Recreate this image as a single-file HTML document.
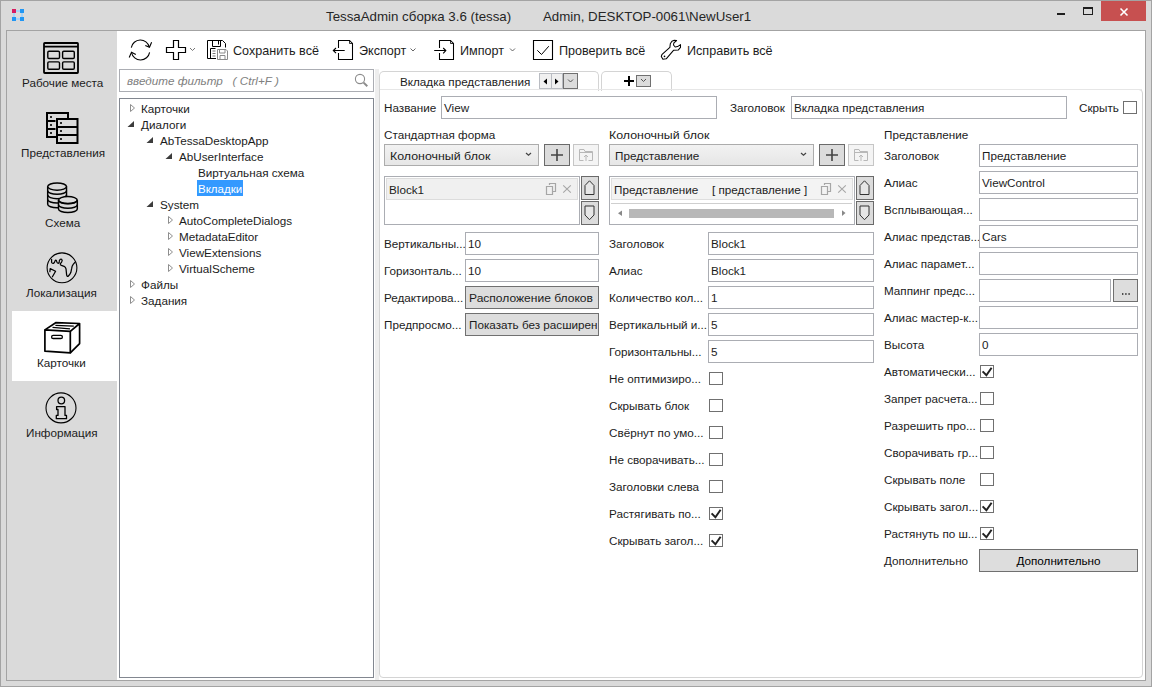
<!DOCTYPE html>
<html><head><meta charset="utf-8"><style>
html,body{margin:0;padding:0;width:1152px;height:687px;overflow:hidden;background:#dadada;}
.t{position:absolute;white-space:nowrap;line-height:20px;font-family:"Liberation Sans",sans-serif;}
.r{position:absolute;box-sizing:content-box;}
svg{position:absolute;left:0;top:0;}
</style></head><body>
<div class="r" style="left:0px;top:0px;width:1150px;height:685px;background:#dadada;border:1px solid #a3a3a3;"></div>
<div class="t " style="left:326px;top:7px;font-size:13.3px;color:#262626;">TessaAdmin сборка 3.6 (tessa)</div>
<div class="t " style="left:543px;top:7px;font-size:13.3px;color:#262626;">Admin, DESKTOP-0061\NewUser1</div>
<div class="r" style="left:1101px;top:1px;width:45px;height:20px;background:#c75050;"></div>
<div class="r" style="left:1083px;top:7px;width:8px;height:5px;border:1px solid #1e1e1e;border-top-width:2px;"></div>
<div class="r" style="left:1057px;top:13px;width:8px;height:2px;background:#1e1e1e;"></div>
<div class="r" style="left:6px;top:30px;width:1138px;height:649px;background:#fff;border:1px solid #a3a3a3;"></div>
<div class="r" style="left:7px;top:31px;width:110px;height:649px;background:#dadada;"></div>
<div class="r" style="left:12px;top:311px;width:105px;height:70px;background:#fff;"></div>
<div class="t " style="left:22px;top:73px;font-size:11.7px;color:#1c1c1c;">Рабочие места</div>
<div class="t " style="left:21px;top:143px;font-size:11.7px;color:#1c1c1c;">Представления</div>
<div class="t " style="left:45px;top:213px;font-size:11.7px;color:#1c1c1c;">Схема</div>
<div class="t " style="left:26px;top:283px;font-size:11.7px;color:#1c1c1c;">Локализация</div>
<div class="t " style="left:37px;top:353px;font-size:11.7px;color:#1c1c1c;">Карточки</div>
<div class="t " style="left:26px;top:423px;font-size:11.7px;color:#1c1c1c;">Информация</div>
<div class="t " style="left:233px;top:41px;font-size:12.6px;color:#1c1c1c;">Сохранить всё</div>
<div class="t " style="left:359px;top:41px;font-size:12.6px;color:#1c1c1c;">Экспорт</div>
<div class="t " style="left:460px;top:41px;font-size:12.6px;color:#1c1c1c;">Импорт</div>
<div class="t " style="left:559px;top:41px;font-size:12.6px;color:#1c1c1c;">Проверить всё</div>
<div class="t " style="left:687px;top:41px;font-size:12.6px;color:#1c1c1c;">Исправить всё</div>
<div class="r" style="left:119px;top:69px;width:253px;height:21px;background:#fff;border:1px solid #abadb3;"></div>
<div class="t " style="left:127px;top:71px;font-size:11.7px;color:#808080;font-style:italic;white-space:pre;">введите фильтр   ( Ctrl+F )</div>
<div class="r" style="left:119px;top:98px;width:253px;height:578px;background:#fff;border:1px solid #828790;"></div>
<div class="r" style="left:375px;top:69px;width:4px;height:611px;background:#eeeeee;"></div>
<div class="t " style="left:141px;top:99px;font-size:11.7px;color:#1c1c1c;">Карточки</div>
<div class="t " style="left:141px;top:115px;font-size:11.7px;color:#1c1c1c;">Диалоги</div>
<div class="t " style="left:160px;top:131px;font-size:11.7px;color:#1c1c1c;">AbTessaDesktopApp</div>
<div class="t " style="left:179px;top:147px;font-size:11.7px;color:#1c1c1c;">AbUserInterface</div>
<div class="t " style="left:198px;top:163px;font-size:11.7px;color:#1c1c1c;">Виртуальная схема</div>
<div class="r" style="left:197px;top:180px;width:46px;height:16px;background:#3399ff;"></div>
<div class="t " style="left:198px;top:179px;font-size:11.7px;color:#fff;transform:scaleX(0.985);transform-origin:0 0;">Вкладки</div>
<div class="t " style="left:160px;top:195px;font-size:11.7px;color:#1c1c1c;">System</div>
<div class="t " style="left:179px;top:211px;font-size:11.7px;color:#1c1c1c;">AutoCompleteDialogs</div>
<div class="t " style="left:179px;top:227px;font-size:11.7px;color:#1c1c1c;">MetadataEditor</div>
<div class="t " style="left:179px;top:243px;font-size:11.7px;color:#1c1c1c;">ViewExtensions</div>
<div class="t " style="left:179px;top:259px;font-size:11.7px;color:#1c1c1c;">VirtualScheme</div>
<div class="t " style="left:141px;top:275px;font-size:11.7px;color:#1c1c1c;">Файлы</div>
<div class="t " style="left:141px;top:291px;font-size:11.7px;color:#1c1c1c;">Задания</div>
<div class="r" style="left:379px;top:89px;width:762px;height:587px;background:#fff;border:1px solid #d4d4d4;border-radius:0 4px 4px 4px;"></div>
<div class="r" style="left:379px;top:71px;width:218px;height:19px;background:#fff;border:1px solid #d4d4d4;border-bottom:none;border-radius:5px 5px 0 0;"></div>
<div class="r" style="left:601px;top:71px;width:69px;height:19px;background:#fff;border:1px solid #d4d4d4;border-bottom:none;border-radius:5px 5px 0 0;"></div>
<div class="r" style="left:380px;top:89px;width:762px;height:1px;background:#e6e6e6;"></div>
<div class="t " style="left:400px;top:72px;font-size:11.7px;color:#1c1c1c;">Вкладка представления</div>
<div class="r" style="left:539px;top:73px;width:11px;height:14px;background:#f0f0f0;border:1px solid #b9bcc2;"></div>
<div class="r" style="left:551px;top:73px;width:10px;height:14px;background:#f0f0f0;border:1px solid #b9bcc2;"></div>
<div class="r" style="left:563px;top:73px;width:13px;height:14px;background:#dcdcdc;border:1px solid #707070;"></div>
<div class="r" style="left:636px;top:75px;width:13px;height:10px;background:#dcdcdc;border:1px solid #707070;"></div>
<div class="t " style="left:384px;top:98px;font-size:11.7px;color:#1c1c1c;">Название</div>
<div class="r" style="left:441px;top:96px;width:274px;height:21px;background:#fff;border:1px solid #abadb3;"></div>
<div class="t " style="left:444px;top:98px;font-size:11.7px;color:#1c1c1c;">View</div>
<div class="t " style="left:730px;top:98px;font-size:11.7px;color:#1c1c1c;">Заголовок</div>
<div class="r" style="left:791px;top:96px;width:274px;height:21px;background:#fff;border:1px solid #abadb3;"></div>
<div class="t " style="left:794px;top:98px;font-size:11.7px;color:#1c1c1c;">Вкладка представления</div>
<div class="t " style="left:1079px;top:98px;font-size:11.7px;color:#1c1c1c;">Скрыть</div>
<div class="r" style="left:1123px;top:101px;width:12px;height:11px;background:#fff;border:1px solid #707070;"></div>
<div class="t " style="left:384px;top:125px;font-size:11.7px;color:#1c1c1c;">Стандартная форма</div>
<div class="r" style="left:384px;top:144px;width:153px;height:20px;background:linear-gradient(#f2f2f2,#e6e6e6);border:1px solid #acacac;"></div>
<div class="t " style="left:390px;top:146px;font-size:11.7px;color:#1c1c1c;transform:scaleX(1.06);transform-origin:0 0;">Колоночный блок</div>
<div class="r" style="left:544px;top:144px;width:24px;height:20px;background:#dcdcdc;border:1px solid #6a6a6a;"></div>
<div class="r" style="left:573px;top:144px;width:24px;height:20px;background:#f4f4f4;border:1px solid #c6c6c6;"></div>
<div class="r" style="left:384px;top:176px;width:194px;height:47px;background:#fff;border:1px solid #abadb3;"></div>
<div class="r" style="left:386px;top:178px;width:190px;height:20px;background:#f0f0f0;border:1px solid #dcdcdc;"></div>
<div class="t " style="left:389px;top:180px;font-size:11.7px;color:#1c1c1c;">Block1</div>
<div class="r" style="left:581px;top:176px;width:16px;height:22px;background:#dcdcdc;border:1px solid #6a6a6a;"></div>
<div class="r" style="left:581px;top:201px;width:16px;height:22px;background:#dcdcdc;border:1px solid #6a6a6a;"></div>
<div class="t " style="left:384px;top:234px;font-size:11.7px;color:#1c1c1c;">Вертикальны...</div>
<div class="r" style="left:465px;top:232px;width:132px;height:21px;background:#fff;border:1px solid #abadb3;"></div>
<div class="t " style="left:468px;top:234px;font-size:11.7px;color:#1c1c1c;">10</div>
<div class="t " style="left:384px;top:261px;font-size:11.7px;color:#1c1c1c;">Горизонталь...</div>
<div class="r" style="left:465px;top:259px;width:132px;height:21px;background:#fff;border:1px solid #abadb3;"></div>
<div class="t " style="left:468px;top:261px;font-size:11.7px;color:#1c1c1c;">10</div>
<div class="t " style="left:384px;top:288px;font-size:11.7px;color:#1c1c1c;">Редактирова...</div>
<div class="r" style="left:465px;top:286px;width:132px;height:21px;background:#dddddd;border:1px solid #707070;"></div>
<div class="t " style="left:469px;top:288px;font-size:11.7px;color:#1c1c1c;transform:scaleX(1.03);transform-origin:0 0;">Расположение блоков</div>
<div class="t " style="left:384px;top:315px;font-size:11.7px;color:#1c1c1c;">Предпросмо...</div>
<div class="r" style="left:465px;top:313px;width:132px;height:21px;background:#dddddd;border:1px solid #707070;"></div>
<div class="t " style="left:469px;top:315px;font-size:11.7px;color:#1c1c1c;width:128px;overflow:hidden;">Показать без расширений</div>
<div class="t " style="left:609px;top:125px;font-size:11.7px;color:#1c1c1c;transform:scaleX(1.06);transform-origin:0 0;">Колоночный блок</div>
<div class="r" style="left:609px;top:144px;width:203px;height:20px;background:linear-gradient(#f2f2f2,#e6e6e6);border:1px solid #acacac;"></div>
<div class="t " style="left:615px;top:146px;font-size:11.7px;color:#1c1c1c;">Представление</div>
<div class="r" style="left:819px;top:144px;width:24px;height:20px;background:#dcdcdc;border:1px solid #6a6a6a;"></div>
<div class="r" style="left:848px;top:144px;width:24px;height:20px;background:#f4f4f4;border:1px solid #c6c6c6;"></div>
<div class="r" style="left:609px;top:176px;width:244px;height:47px;background:#fff;border:1px solid #abadb3;"></div>
<div class="r" style="left:611px;top:178px;width:240px;height:20px;background:#f3f3f3;border:1px solid #dedede;"></div>
<div class="t " style="left:614px;top:180px;font-size:11.7px;color:#1c1c1c;">Представление</div>
<div class="t " style="left:712px;top:180px;font-size:11.7px;color:#1c1c1c;">[ представление ]</div>
<div class="r" style="left:611px;top:203px;width:241px;height:1px;background:#cfcfcf;"></div>
<div class="r" style="left:629px;top:209px;width:205px;height:9px;background:#b8b8b8;"></div>
<div class="r" style="left:856px;top:176px;width:16px;height:22px;background:#dcdcdc;border:1px solid #6a6a6a;"></div>
<div class="r" style="left:856px;top:201px;width:16px;height:22px;background:#dcdcdc;border:1px solid #6a6a6a;"></div>
<div class="t " style="left:609px;top:234px;font-size:11.7px;color:#1c1c1c;">Заголовок</div>
<div class="r" style="left:708px;top:232px;width:164px;height:21px;background:#fff;border:1px solid #abadb3;"></div>
<div class="t " style="left:711px;top:234px;font-size:11.7px;color:#1c1c1c;">Block1</div>
<div class="t " style="left:609px;top:261px;font-size:11.7px;color:#1c1c1c;">Алиас</div>
<div class="r" style="left:708px;top:259px;width:164px;height:21px;background:#fff;border:1px solid #abadb3;"></div>
<div class="t " style="left:711px;top:261px;font-size:11.7px;color:#1c1c1c;">Block1</div>
<div class="t " style="left:609px;top:288px;font-size:11.7px;color:#1c1c1c;">Количество кол...</div>
<div class="r" style="left:708px;top:286px;width:164px;height:21px;background:#fff;border:1px solid #abadb3;"></div>
<div class="t " style="left:711px;top:288px;font-size:11.7px;color:#1c1c1c;">1</div>
<div class="t " style="left:609px;top:315px;font-size:11.7px;color:#1c1c1c;">Вертикальный и...</div>
<div class="r" style="left:708px;top:313px;width:164px;height:21px;background:#fff;border:1px solid #abadb3;"></div>
<div class="t " style="left:711px;top:315px;font-size:11.7px;color:#1c1c1c;">5</div>
<div class="t " style="left:609px;top:342px;font-size:11.7px;color:#1c1c1c;">Горизонтальны...</div>
<div class="r" style="left:708px;top:340px;width:164px;height:21px;background:#fff;border:1px solid #abadb3;"></div>
<div class="t " style="left:711px;top:342px;font-size:11.7px;color:#1c1c1c;">5</div>
<div class="t " style="left:609px;top:369px;font-size:11.7px;color:#1c1c1c;">Не оптимизиро...</div>
<div class="r" style="left:709px;top:372px;width:12px;height:11px;background:#fff;border:1px solid #707070;"></div>
<div class="t " style="left:609px;top:396px;font-size:11.7px;color:#1c1c1c;">Скрывать блок</div>
<div class="r" style="left:709px;top:399px;width:12px;height:11px;background:#fff;border:1px solid #707070;"></div>
<div class="t " style="left:609px;top:423px;font-size:11.7px;color:#1c1c1c;">Свёрнут по умо...</div>
<div class="r" style="left:709px;top:426px;width:12px;height:11px;background:#fff;border:1px solid #707070;"></div>
<div class="t " style="left:609px;top:450px;font-size:11.7px;color:#1c1c1c;">Не сворачивать...</div>
<div class="r" style="left:709px;top:453px;width:12px;height:11px;background:#fff;border:1px solid #707070;"></div>
<div class="t " style="left:609px;top:477px;font-size:11.7px;color:#1c1c1c;">Заголовки слева</div>
<div class="r" style="left:709px;top:480px;width:12px;height:11px;background:#fff;border:1px solid #707070;"></div>
<div class="t " style="left:609px;top:504px;font-size:11.7px;color:#1c1c1c;">Растягивать по...</div>
<div class="r" style="left:709px;top:507px;width:12px;height:11px;background:#fff;border:1px solid #707070;"></div>
<div class="t " style="left:609px;top:531px;font-size:11.7px;color:#1c1c1c;">Скрывать загол...</div>
<div class="r" style="left:709px;top:534px;width:12px;height:11px;background:#fff;border:1px solid #707070;"></div>
<div class="t " style="left:884px;top:125px;font-size:11.7px;color:#1c1c1c;">Представление</div>
<div class="t " style="left:884px;top:146px;font-size:11.7px;color:#1c1c1c;">Заголовок</div>
<div class="r" style="left:979px;top:144px;width:157px;height:21px;background:#fff;border:1px solid #abadb3;"></div>
<div class="t " style="left:982px;top:146px;font-size:11.7px;color:#1c1c1c;">Представление</div>
<div class="t " style="left:884px;top:173px;font-size:11.7px;color:#1c1c1c;">Алиас</div>
<div class="r" style="left:979px;top:171px;width:157px;height:21px;background:#fff;border:1px solid #abadb3;"></div>
<div class="t " style="left:982px;top:173px;font-size:11.7px;color:#1c1c1c;">ViewControl</div>
<div class="t " style="left:884px;top:200px;font-size:11.7px;color:#1c1c1c;">Всплывающая...</div>
<div class="r" style="left:979px;top:198px;width:157px;height:21px;background:#fff;border:1px solid #abadb3;"></div>
<div class="t " style="left:884px;top:227px;font-size:11.7px;color:#1c1c1c;">Алиас представ...</div>
<div class="r" style="left:979px;top:225px;width:157px;height:21px;background:#fff;border:1px solid #abadb3;"></div>
<div class="t " style="left:982px;top:227px;font-size:11.7px;color:#1c1c1c;">Cars</div>
<div class="t " style="left:884px;top:254px;font-size:11.7px;color:#1c1c1c;">Алиас парамет...</div>
<div class="r" style="left:979px;top:252px;width:157px;height:21px;background:#fff;border:1px solid #abadb3;"></div>
<div class="t " style="left:884px;top:281px;font-size:11.7px;color:#1c1c1c;">Маппинг предс...</div>
<div class="r" style="left:979px;top:279px;width:130px;height:21px;background:#fff;border:1px solid #abadb3;"></div>
<div class="r" style="left:1113px;top:279px;width:23px;height:21px;background:#dddddd;border:1px solid #707070;"></div>
<div class="t " style="left:884px;top:308px;font-size:11.7px;color:#1c1c1c;">Алиас мастер-к...</div>
<div class="r" style="left:979px;top:306px;width:157px;height:21px;background:#fff;border:1px solid #abadb3;"></div>
<div class="t " style="left:884px;top:335px;font-size:11.7px;color:#1c1c1c;">Высота</div>
<div class="r" style="left:979px;top:333px;width:157px;height:21px;background:#fff;border:1px solid #abadb3;"></div>
<div class="t " style="left:982px;top:335px;font-size:11.7px;color:#1c1c1c;">0</div>
<div class="t " style="left:884px;top:362px;font-size:11.7px;color:#1c1c1c;">Автоматически...</div>
<div class="r" style="left:980px;top:365px;width:12px;height:11px;background:#fff;border:1px solid #707070;"></div>
<div class="t " style="left:884px;top:389px;font-size:11.7px;color:#1c1c1c;">Запрет расчета...</div>
<div class="r" style="left:980px;top:392px;width:12px;height:11px;background:#fff;border:1px solid #707070;"></div>
<div class="t " style="left:884px;top:416px;font-size:11.7px;color:#1c1c1c;">Разрешить про...</div>
<div class="r" style="left:980px;top:419px;width:12px;height:11px;background:#fff;border:1px solid #707070;"></div>
<div class="t " style="left:884px;top:443px;font-size:11.7px;color:#1c1c1c;">Сворачивать гр...</div>
<div class="r" style="left:980px;top:446px;width:12px;height:11px;background:#fff;border:1px solid #707070;"></div>
<div class="t " style="left:884px;top:470px;font-size:11.7px;color:#1c1c1c;">Скрывать поле</div>
<div class="r" style="left:980px;top:473px;width:12px;height:11px;background:#fff;border:1px solid #707070;"></div>
<div class="t " style="left:884px;top:497px;font-size:11.7px;color:#1c1c1c;">Скрывать загол...</div>
<div class="r" style="left:980px;top:500px;width:12px;height:11px;background:#fff;border:1px solid #707070;"></div>
<div class="t " style="left:884px;top:524px;font-size:11.7px;color:#1c1c1c;">Растянуть по ш...</div>
<div class="r" style="left:980px;top:527px;width:12px;height:11px;background:#fff;border:1px solid #707070;"></div>
<div class="t " style="left:884px;top:551px;font-size:11.7px;color:#1c1c1c;">Дополнительно</div>
<div class="r" style="left:979px;top:549px;width:157px;height:21px;background:#dddddd;border:1px solid #707070;"></div>
<div class="t" style="left:979px;top:551px;width:159px;text-align:center;font-size:11.7px;">Дополнительно</div>
<svg width="1152" height="687" viewBox="0 0 1152 687"><g><line x1="14" y1="11" x2="22" y2="11" stroke="#a9d4f5" stroke-width="2"/><line x1="14" y1="19" x2="22" y2="19" stroke="#a9d4f5" stroke-width="2"/><line x1="14" y1="11" x2="14" y2="19" stroke="#a9d4f5" stroke-width="2"/><line x1="22" y1="11" x2="22" y2="19" stroke="#a9d4f5" stroke-width="2"/><rect x="12" y="9" width="4" height="4" fill="#d81b60"/><rect x="20" y="9" width="4" height="4" fill="#2196f3"/><rect x="12" y="17" width="4" height="4" fill="#2196f3"/><rect x="20" y="17" width="4" height="4" fill="#2196f3"/></g>
<path d="M1120.5,8.5 L1127.5,15.5 M1127.5,8.5 L1120.5,15.5" stroke="#fff" stroke-width="1.6"/>
<path d="M130.5,104.5 L134.5,108 L130.5,111.5 Z" fill="#fff" stroke="#8e8e8e" stroke-width="1"/>
<path d="M134,121 L134,127 L127.5,127 Z" fill="#3c3c3c"/>
<path d="M153,137 L153,143 L146.5,143 Z" fill="#3c3c3c"/>
<path d="M172,153 L172,159 L165.5,159 Z" fill="#3c3c3c"/>
<path d="M153,201 L153,207 L146.5,207 Z" fill="#3c3c3c"/>
<path d="M168.5,216.5 L172.5,220 L168.5,223.5 Z" fill="#fff" stroke="#8e8e8e" stroke-width="1"/>
<path d="M168.5,232.5 L172.5,236 L168.5,239.5 Z" fill="#fff" stroke="#8e8e8e" stroke-width="1"/>
<path d="M168.5,248.5 L172.5,252 L168.5,255.5 Z" fill="#fff" stroke="#8e8e8e" stroke-width="1"/>
<path d="M168.5,264.5 L172.5,268 L168.5,271.5 Z" fill="#fff" stroke="#8e8e8e" stroke-width="1"/>
<path d="M130.5,280.5 L134.5,284 L130.5,287.5 Z" fill="#fff" stroke="#8e8e8e" stroke-width="1"/>
<path d="M130.5,296.5 L134.5,300 L130.5,303.5 Z" fill="#fff" stroke="#8e8e8e" stroke-width="1"/>
<path d="M547,78.5 L543.5,81.5 L547,84.5 Z" fill="#000"/>
<path d="M555,78.5 L558.5,81.5 L555,84.5 Z" fill="#000"/>
<path d="M568,79.5 L570.5,82 L573,79.5" fill="none" stroke="#555" stroke-width="1"/>
<path d="M624,81 H634 M629,76 V86" stroke="#000" stroke-width="2"/>
<path d="M641,79 L643.5,81.5 L646,79" fill="none" stroke="#555" stroke-width="1"/>
<path d="M526,153 L528.5,155.3 L531,153" fill="none" stroke="#444" stroke-width="1.2"/>
<path d="M551,155 H563 M557,149 V161" stroke="#444" stroke-width="1.6"/>
<path d="M579.5,160.5 V149.5 H584 L585,151.5 H592.5 V160.5 M579.5,152.5 H592.5 M586,161 V155 M584,157 L586,155 L588,157 M579.5,160.5 H583.5 M588.5,160.5 H592.5" fill="none" stroke="#b8b8b8" stroke-width="1"/>
<path d="M546.5,186.5 H552.5 V194.5 H546.5 Z M549.5,185 V183.5 H555.5 V191.5 H553" fill="none" stroke="#a6a6a6" stroke-width="1.2"/>
<path d="M563.2,185.4 L570.8,192.7 M570.8,185.4 L563.2,192.7" stroke="#a6a6a6" stroke-width="1.1"/>
<path d="M585.0,194.5 V185.5 L589.5,180.8 L594.0,185.5 V194.5 Z" fill="#fff" fill-opacity="0.3" stroke="#333" stroke-width="1"/>
<path d="M585.0,206 V215 L589.5,219.7 L594.0,215 V206 Z" fill="#fff" fill-opacity="0.3" stroke="#333" stroke-width="1"/>
<path d="M801,153 L803.5,155.3 L806,153" fill="none" stroke="#444" stroke-width="1.2"/>
<path d="M826,155 H838 M832,149 V161" stroke="#444" stroke-width="1.6"/>
<path d="M854.5,160.5 V149.5 H859 L860,151.5 H867.5 V160.5 M854.5,152.5 H867.5 M861,161 V155 M859,157 L861,155 L863,157 M854.5,160.5 H858.5 M863.5,160.5 H867.5" fill="none" stroke="#b8b8b8" stroke-width="1"/>
<path d="M821.5,186.5 H827.5 V194.5 H821.5 Z M824.5,185 V183.5 H830.5 V191.5 H828" fill="none" stroke="#a6a6a6" stroke-width="1.2"/>
<path d="M838.2,185.4 L845.8,192.7 M845.8,185.4 L838.2,192.7" stroke="#a6a6a6" stroke-width="1.1"/>
<path d="M622,210.5 L618,213.25 L622,216 Z" fill="#888"/>
<path d="M842,210.3 L845.5,213.1 L842,215.9 Z" fill="#888"/>
<path d="M860.0,194.5 V185.5 L864.5,180.8 L869.0,185.5 V194.5 Z" fill="#fff" fill-opacity="0.3" stroke="#333" stroke-width="1"/>
<path d="M860.0,206 V215 L864.5,219.7 L869.0,215 V206 Z" fill="#fff" fill-opacity="0.3" stroke="#333" stroke-width="1"/>
<path d="M711.6,513.4 L715.4,517.2 L720.6,509.8" fill="none" stroke="#222" stroke-width="2"/>
<path d="M711.6,540.4 L715.4,544.2 L720.6,536.8" fill="none" stroke="#222" stroke-width="2"/>
<path d="M1122,294 h1.4 M1125.2,294 h1.4 M1128.4,294 h1.4" stroke="#1c1c1c" stroke-width="1.4"/>
<path d="M982.6,371.4 L986.4,375.2 L991.6,367.8" fill="none" stroke="#222" stroke-width="2"/>
<path d="M982.6,506.4 L986.4,510.2 L991.6,502.8" fill="none" stroke="#222" stroke-width="2"/>
<path d="M982.6,533.4 L986.4,537.2 L991.6,529.8" fill="none" stroke="#222" stroke-width="2"/>
<path d="M131.3,47.6 A9.2,9.2 0 0 1 149.3,47" stroke="#000" fill="none" stroke-width="1.1"/>
<path d="M145.3,45.4 L149.5,47.3 L151.6,42.3" stroke="#000" fill="none" stroke-width="1.1"/>
<path d="M149.6,52.3 A9.2,9.2 0 0 1 131.5,52.5" stroke="#000" fill="none" stroke-width="1.1"/>
<path d="M135.8,54.5 L131.5,52.3 L129.2,57.4" stroke="#000" fill="none" stroke-width="1.1"/>
<path d="M173.5,40.5 H178.5 V47.5 H185.5 V52.5 H178.5 V59.5 H173.5 V52.5 H166.5 V47.5 H173.5 Z" stroke="#000" fill="none" stroke-width="1.2"/>
<path d="M190,48 L192.5,50.5 L195,48" fill="none" stroke="#666" stroke-width="0.9"/>
<path d="M216,58.5 H207.5 V40.5 H222.5 L225.5,43.5 V47.5" stroke="#000" fill="none" stroke-width="1"/>
<path d="M212.5,40.5 V46.5 H220.5 V40.5 M218.5,41 V44.5" stroke="#000" fill="none" stroke-width="1"/>
<path d="M210.5,58.5 V48.5 H215.5" stroke="#000" fill="none" stroke-width="1"/>
<path d="M212.5,51 H215.5 M212.5,53.5 H215.5 M212.5,56 H215.5" stroke="#777" stroke-width="1"/>
<path d="M217.5,59.5 V49.5 H226 L227.5,51 V59.5 Z M219.5,49.5 V53 H225 V49.5 M220,59.5 V55.5 H225 V59.5" fill="none" stroke="#8a8a8a" stroke-width="1"/>
<path d="M338.5,48 V40.5 H349.5 L352.5,43.5 V59.5 H338.5 V53" stroke="#000" fill="none" stroke-width="1.05"/>
<path d="M349.5,40.5 V43.5 H352.5" stroke="#000" fill="none" stroke-width="0.8"/>
<path d="M344.7,50.5 H333.5 M336,48 L333.3,50.5 L336,53.2" stroke="#000" fill="none" stroke-width="1.1"/>
<path d="M410.5,48.5 L413,51 L415.5,48.5" fill="none" stroke="#555" stroke-width="0.9"/>
<path d="M439.5,48 V40.5 H450.5 L453.5,43.5 V59.5 H439.5 V53" stroke="#000" fill="none" stroke-width="1.05"/>
<path d="M450.5,40.5 V43.5 H453.5" stroke="#000" fill="none" stroke-width="0.8"/>
<path d="M434.2,50.5 H445.5 M443.2,48 L445.8,50.5 L443.2,53.4" stroke="#000" fill="none" stroke-width="1.1"/>
<path d="M510,48.5 L512.5,51 L515,48.5" fill="none" stroke="#555" stroke-width="0.9"/>
<path d="M533.5,40.5 H552.5 V59.5 H533.5 Z" stroke="#000" fill="none" stroke-width="1.1"/>
<path d="M537.3,50.3 L541.5,54.5 L548.8,46.2" stroke="#000" fill="none" stroke-width="1"/>
<path d="M669.9,47.4 L670.3,43.7 L671.9,41.3 L674.3,40.3 L676.6,40.5 L673.9,42.9 L673.5,45 L675.2,47 L677.6,46.6 L680.5,44.6 L680.5,47.4 L678.4,49.9 L673.5,50.3 L666.2,58.8 L662.9,59.2 L661.3,56.4 L662.1,54.3 Z" stroke="#000" fill="none" stroke-width="1.05" stroke-linejoin="round"/>
<circle cx="664.5" cy="56.4" r="0.8" fill="#000"/>
<rect x="44" y="43" width="34" height="30" rx="0.8" stroke="#000" fill="none" stroke-width="1.8"/>
<path d="M44,46.6 H78" stroke="#000" fill="none" stroke-width="1.7"/>
<rect x="47.8" y="51.2" width="11.7" height="7.3" rx="1.2" stroke="#000" fill="none" stroke-width="1.4"/>
<rect x="62.6" y="51.2" width="11.7" height="7.3" rx="1.2" stroke="#000" fill="none" stroke-width="1.4"/>
<rect x="47.8" y="61.9" width="11.7" height="7.3" rx="1.2" stroke="#000" fill="none" stroke-width="1.4"/>
<rect x="62.6" y="61.9" width="11.7" height="7.3" rx="1.2" stroke="#000" fill="none" stroke-width="1.4"/>
<path d="M56,137 H47 V113 H68 V118.5" stroke="#000" fill="none" stroke-width="2"/>
<path d="M47,121 H55.5 M47,129 H55.5" stroke="#000" fill="none" stroke-width="2"/>
<rect x="57" y="119" width="20.5" height="24" stroke="#000" fill="none" stroke-width="2"/>
<path d="M57,127 H77.5 M57,135 H77.5" stroke="#000" fill="none" stroke-width="2"/>
<rect x="50.1" y="116.1" width="1.8" height="1.8" fill="#000"/>
<rect x="50.1" y="124.1" width="1.8" height="1.8" fill="#000"/>
<rect x="50.1" y="132.1" width="1.8" height="1.8" fill="#000"/>
<rect x="60.1" y="122.1" width="1.8" height="1.8" fill="#000"/>
<rect x="60.1" y="130.1" width="1.8" height="1.8" fill="#000"/>
<rect x="60.1" y="138.1" width="1.8" height="1.8" fill="#000"/>
<path d="M47.7,186.6 V204.20000000000002 A9.4,3.6 0 0 0 66.5,204.20000000000002 V186.6" fill="#dadada" stroke="#000" stroke-width="1.5"/><ellipse cx="57.1" cy="186.6" rx="9.4" ry="3.6" fill="#dadada" stroke="#000" stroke-width="1.5"/><path d="M47.7,190.70000000000002 A9.4,3.6 0 0 0 66.5,190.70000000000002" fill="none" stroke="#000" stroke-width="1.5"/><path d="M47.7,195.1 A9.4,3.6 0 0 0 66.5,195.1" fill="none" stroke="#000" stroke-width="1.5"/><path d="M47.7,199.4 A9.4,3.6 0 0 0 66.5,199.4" fill="none" stroke="#000" stroke-width="1.5"/>
<path d="M58.50000000000001,200.2 V209.0 A9.4,3.6 0 0 0 77.30000000000001,209.0 V200.2" fill="#dadada" stroke="#000" stroke-width="1.5"/><ellipse cx="67.9" cy="200.2" rx="9.4" ry="3.6" fill="#dadada" stroke="#000" stroke-width="1.5"/><path d="M58.50000000000001,200.0 A9.4,3.6 0 0 0 77.30000000000001,200.0" fill="none" stroke="#000" stroke-width="1.5"/><path d="M58.50000000000001,204.70000000000002 A9.4,3.6 0 0 0 77.30000000000001,204.70000000000002" fill="none" stroke="#000" stroke-width="1.5"/>
<circle cx="62" cy="267.8" r="14.9" stroke="#000" fill="none" stroke-width="1.1"/>
<path d="M51.6,259.4 L51.6,262.4 Q52,263.6 53.4,263.4 Q54.6,262.8 55.2,260.6 Q55.8,259.6 56.4,260.6 Q57,263.4 58.2,263.3 Q59.6,262.8 59.4,260.4 Q60.2,258.6 61.6,259.2 Q62.8,260.4 61.6,262 L60.2,263.8 Q60.2,265.2 61.4,265.4 L64.1,266.3 Q65.6,267.2 66,268.8 L66.6,274.6 Q66.9,276.6 68,276.4 Q69.6,275.4 70.8,272.6 L71.7,268.4 Q71.8,266.2 73.2,264.4 L74.9,262.3" stroke="#000" fill="none" stroke-width="1.25" stroke-linejoin="round" stroke-linecap="round"/>
<path d="M49.9,271.6 L50.2,268.6 L55.6,271.2 L52.4,276.8" stroke="#000" fill="none" stroke-width="1.25" stroke-linejoin="round" stroke-linecap="round"/>
<path d="M44.9,329.9 L70.3,331.4 L70.3,352.9 L44.9,351.2 Z" fill="#fff" stroke="#000" stroke-width="1.7" stroke-linejoin="round"/>
<path d="M44.9,329.9 L55.7,322.7 L79.6,323.5 L70.3,331.4 M79.6,323.5 L79.6,343.6 L70.3,352.9" stroke="#000" fill="none" stroke-width="1.7" stroke-linejoin="round"/>
<path d="M52.5,327.3 L70,328.8 M55.4,325.3 L73.8,326.1" stroke="#000" fill="none" stroke-width="1.2"/>
<rect x="51.6" y="335.3" width="10.8" height="3.2" rx="1.6" stroke="#000" fill="none" stroke-width="1.3"/>
<circle cx="61" cy="407.9" r="15" stroke="#000" fill="none" stroke-width="1.1"/>
<circle cx="61.3" cy="400.5" r="3.3" stroke="#000" fill="none" stroke-width="1.3"/>
<path d="M56.6,406.6 H65 V415.4 H66.5 V418.7 H56.3 V415.4 H58 V409.5 H56.6 Z" stroke="#000" fill="none" stroke-width="1.3" stroke-linejoin="round"/>
<circle cx="360" cy="79" r="4.6" fill="none" stroke="#8c8c8c" stroke-width="1.1"/><path d="M363.6,82.6 L367.3,86.3" stroke="#8c8c8c" stroke-width="2"/></svg>
</body></html>
